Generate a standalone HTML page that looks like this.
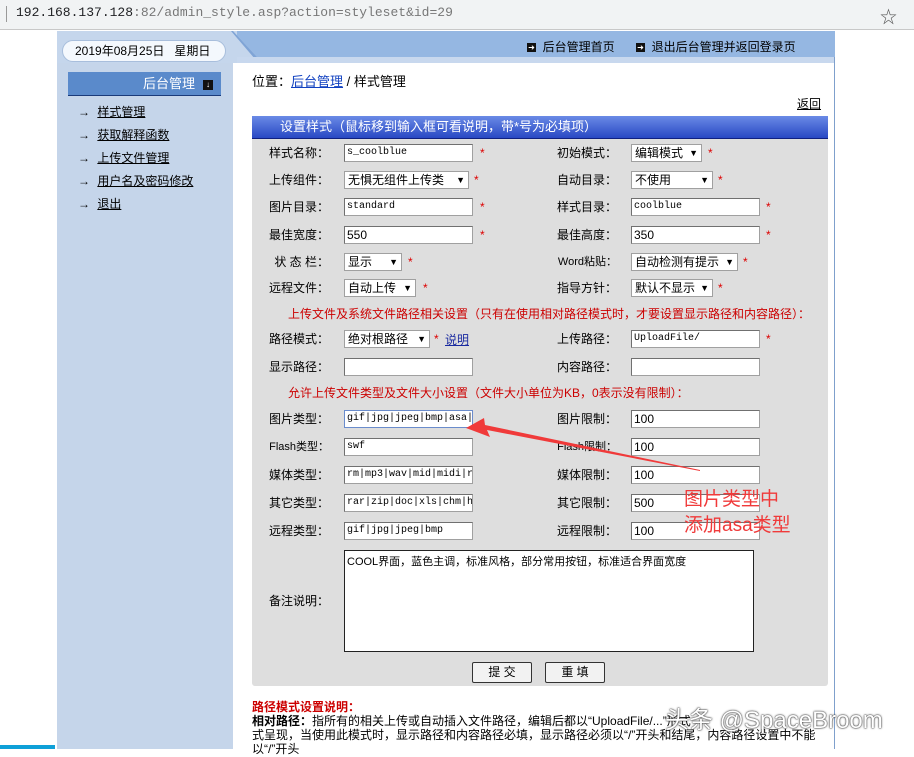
<!DOCTYPE html>
<html><head><meta charset="utf-8">
<style>
*{margin:0;padding:0;box-sizing:border-box}
body{width:914px;height:749px;overflow:hidden;background:#fff;position:relative;font-family:"Liberation Sans","Noto Sans CJK SC",sans-serif;font-size:12px;color:#000}
.a{position:absolute;white-space:nowrap}
.url{left:0;top:0;width:914px;height:30px;background:#f1f3f4;border-bottom:1px solid #c8c8c8}
.lbl{position:absolute;font-size:12px;line-height:16px;text-align:right}
.in{position:absolute;height:18px;background:#fff;border:1px solid #a0a0a0;border-top-color:#707070;border-left-color:#707070;font-family:"Liberation Mono","Noto Sans CJK SC",monospace;font-size:10px;line-height:16px;padding-left:2px;overflow:hidden;white-space:nowrap}
.sel{position:absolute;height:18px;background:#fff;border:1px solid #a0a0a0;font-size:12px;line-height:16px;padding-left:3px;white-space:nowrap}
.sel:after{content:"▼";position:absolute;right:3px;top:0;font-size:9px}
.st{position:absolute;color:#d00;font-size:12px}
.red{position:absolute;color:#c00;font-size:12px;white-space:nowrap}
.mi{position:absolute;left:78px;font-size:12px;white-space:nowrap}
.mi u{margin-left:4px}
</style></head><body>
<div class="a url"></div>
<div class="a" style="left:6px;top:6px;width:1px;height:16px;background:#999"></div>
<div class="a" style="left:16px;top:5px;font-family:'Liberation Mono',monospace;font-size:13px;color:#202124">192.168.137.128<span style="color:#777">:82/admin_style.asp?action=styleset&amp;id=29</span></div>
<div class="a" style="left:880px;top:3px;font-size:17px;color:#555">☆</div>

<div class="a" style="left:57px;top:31px;width:778px;height:26px;background:#95b7e2"></div>
<div class="a" style="left:57px;top:31px;width:180px;height:32px;background:#c5d6ec"></div>
<svg class="a" style="left:225px;top:31px" width="40" height="32"><polygon points="0,0 8,0 32,26 40,26 40,32 0,32" fill="#c5d6ec"/><polygon points="8,0 32,26 40,26 40,28 30,28 6,0" fill="#7fa4d6"/></svg>
<div class="a" style="left:237px;top:57px;width:598px;height:6px;background:#c8d8ee"></div>
<div class="a" style="left:834px;top:57px;width:1px;height:692px;background:#7fa0cc"></div>
<div class="a" style="left:527px;top:38px;font-size:12px"><span style="display:inline-block;width:9px;height:9px;background:#111;color:#fff;font-size:8px;line-height:9px;text-align:center;vertical-align:1px">➜</span>&nbsp; 后台管理首页</div>
<div class="a" style="left:636px;top:38px;font-size:12px"><span style="display:inline-block;width:9px;height:9px;background:#111;color:#fff;font-size:8px;line-height:9px;text-align:center;vertical-align:1px">➜</span>&nbsp; 退出后台管理并返回登录页</div>

<div class="a" style="left:57px;top:63px;width:176px;height:686px;background:#c5d5ea"></div>
<div class="a" style="left:62px;top:40px;width:164px;height:22px;background:#f4f8fd;border:1px solid #a8bedc;border-radius:11px;font-size:12px;line-height:20px;padding-left:12px">2019年08月25日&nbsp;&nbsp;&nbsp;星期日</div>
<div class="a" style="left:68px;top:72px;width:153px;height:24px;background:#5a8acb;border-bottom:1px solid #1a3a7a;color:#fff;font-size:13px;line-height:24px;text-align:right;padding-right:26px">后台管理</div>
<div class="a" style="left:203px;top:80px;width:10px;height:10px;background:#111;color:#fff;font-size:8px;line-height:10px;text-align:center">↓</div>
<div class="mi" style="top:103px">→ <u>样式管理</u></div>
<div class="mi" style="top:126px">→ <u>获取解释函数</u></div>
<div class="mi" style="top:149px">→ <u>上传文件管理</u></div>
<div class="mi" style="top:172px">→ <u>用户名及密码修改</u></div>
<div class="mi" style="top:195px">→ <u>退出</u></div>

<div class="a" style="left:252px;top:71px;font-size:13px">位置：<u style="color:#1040c0">后台管理</u> / 样式管理</div>
<div class="a" style="left:797px;top:95px;font-size:12px"><u>返回</u></div>
<div class="a" style="left:252px;top:116px;width:576px;height:570px;background:#dedede;border-radius:0 0 3px 3px"></div>
<div class="a" style="left:252px;top:116px;width:576px;height:23px;background:linear-gradient(#6a8ae6,#2848c4);color:#fff;font-size:13px;line-height:22px;padding-left:28px;border-bottom:1px solid #102080">设置样式（鼠标移到输入框可看说明，带*号为必填项）</div>

<div class="lbl" style="left:250px;width:79px;top:145px">样式名称：</div>
<div class="in" style="left:344px;top:144px;width:129px">s_coolblue</div><div class="st" style="left:480px;top:146px">*</div>
<div class="lbl" style="left:540px;width:77px;top:145px">初始模式：</div>
<div class="sel" style="left:631px;top:144px;width:71px">编辑模式</div><div class="st" style="left:708px;top:146px">*</div>

<div class="lbl" style="left:250px;width:79px;top:172px">上传组件：</div>
<div class="sel" style="left:344px;top:171px;width:125px">无惧无组件上传类</div><div class="st" style="left:474px;top:173px">*</div>
<div class="lbl" style="left:540px;width:77px;top:172px">自动目录：</div>
<div class="sel" style="left:631px;top:171px;width:82px">不使用</div><div class="st" style="left:718px;top:173px">*</div>

<div class="lbl" style="left:250px;width:79px;top:199px">图片目录：</div>
<div class="in" style="left:344px;top:198px;width:129px">standard</div><div class="st" style="left:480px;top:200px">*</div>
<div class="lbl" style="left:540px;width:77px;top:199px">样式目录：</div>
<div class="in" style="left:631px;top:198px;width:129px">coolblue</div><div class="st" style="left:766px;top:200px">*</div>

<div class="lbl" style="left:250px;width:79px;top:227px">最佳宽度：</div>
<div class="in" style="left:344px;top:226px;width:129px;font-family:'Liberation Sans',sans-serif;font-size:12px">550</div><div class="st" style="left:480px;top:228px">*</div>
<div class="lbl" style="left:540px;width:77px;top:227px">最佳高度：</div>
<div class="in" style="left:631px;top:226px;width:129px;font-family:'Liberation Sans',sans-serif;font-size:12px">350</div><div class="st" style="left:766px;top:228px">*</div>

<div class="lbl" style="left:250px;width:79px;top:254px">状 态 栏：</div>
<div class="sel" style="left:344px;top:253px;width:58px">显示</div><div class="st" style="left:408px;top:255px">*</div>
<div class="lbl" style="left:540px;width:77px;top:254px;font-size:11px">Word粘贴：</div>
<div class="sel" style="left:631px;top:253px;width:107px">自动检测有提示</div><div class="st" style="left:743px;top:255px">*</div>

<div class="lbl" style="left:250px;width:79px;top:280px">远程文件：</div>
<div class="sel" style="left:344px;top:279px;width:72px">自动上传</div><div class="st" style="left:423px;top:281px">*</div>
<div class="lbl" style="left:540px;width:77px;top:280px">指导方针：</div>
<div class="sel" style="left:631px;top:279px;width:82px">默认不显示</div><div class="st" style="left:718px;top:281px">*</div>

<div class="red" style="left:288px;top:305px">上传文件及系统文件路径相关设置（只有在使用相对路径模式时，才要设置显示路径和内容路径）：</div>

<div class="lbl" style="left:250px;width:79px;top:331px">路径模式：</div>
<div class="sel" style="left:344px;top:330px;width:86px">绝对根路径</div><div class="st" style="left:434px;top:332px">*</div>
<div class="a" style="left:445px;top:331px;color:#1a2aa0"><u>说明</u></div>
<div class="lbl" style="left:540px;width:77px;top:331px">上传路径：</div>
<div class="in" style="left:631px;top:330px;width:129px">UploadFile/</div><div class="st" style="left:766px;top:332px">*</div>

<div class="lbl" style="left:250px;width:79px;top:359px">显示路径：</div>
<div class="in" style="left:344px;top:358px;width:129px"></div>
<div class="lbl" style="left:540px;width:77px;top:359px">内容路径：</div>
<div class="in" style="left:631px;top:358px;width:129px"></div>

<div class="red" style="left:288px;top:384px">允许上传文件类型及文件大小设置（文件大小单位为KB，0表示没有限制）：</div>

<div class="lbl" style="left:250px;width:79px;top:411px">图片类型：</div>
<div class="in" style="left:344px;top:410px;width:129px;border:1px solid #6a8ccc">gif|jpg|jpeg|bmp|asa|</div>
<div class="lbl" style="left:540px;width:77px;top:411px">图片限制：</div>
<div class="in" style="left:631px;top:410px;width:129px;font-family:'Liberation Sans',sans-serif;font-size:12px">100</div>

<div class="lbl" style="left:250px;width:79px;top:439px;font-size:11px">Flash类型：</div>
<div class="in" style="left:344px;top:438px;width:129px">swf</div>
<div class="lbl" style="left:540px;width:77px;top:439px;font-size:11px">Flash限制：</div>
<div class="in" style="left:631px;top:438px;width:129px;font-family:'Liberation Sans',sans-serif;font-size:12px">100</div>

<div class="lbl" style="left:250px;width:79px;top:467px">媒体类型：</div>
<div class="in" style="left:344px;top:466px;width:129px">rm|mp3|wav|mid|midi|r</div>
<div class="lbl" style="left:540px;width:77px;top:467px">媒体限制：</div>
<div class="in" style="left:631px;top:466px;width:129px;font-family:'Liberation Sans',sans-serif;font-size:12px">100</div>

<div class="lbl" style="left:250px;width:79px;top:495px">其它类型：</div>
<div class="in" style="left:344px;top:494px;width:129px">rar|zip|doc|xls|chm|h</div>
<div class="lbl" style="left:540px;width:77px;top:495px">其它限制：</div>
<div class="in" style="left:631px;top:494px;width:129px;font-family:'Liberation Sans',sans-serif;font-size:12px">500</div>

<div class="lbl" style="left:250px;width:79px;top:523px">远程类型：</div>
<div class="in" style="left:344px;top:522px;width:129px">gif|jpg|jpeg|bmp</div>
<div class="lbl" style="left:540px;width:77px;top:523px">远程限制：</div>
<div class="in" style="left:631px;top:522px;width:129px;font-family:'Liberation Sans',sans-serif;font-size:12px">100</div>

<div class="lbl" style="left:250px;width:79px;top:593px">备注说明：</div>
<div class="a" style="left:344px;top:550px;width:410px;height:102px;background:#fff;border:1px solid #222;font-size:11px;padding:2px 2px">COOL界面，蓝色主调，标准风格，部分常用按钮，标准适合界面宽度</div>

<div class="a" style="left:472px;top:662px;width:60px;height:21px;background:#f2f2f2;border:1px solid #333;border-radius:2px;text-align:center;line-height:19px;font-size:12px">提 交</div>
<div class="a" style="left:545px;top:662px;width:60px;height:21px;background:#f2f2f2;border:1px solid #333;border-radius:2px;text-align:center;line-height:19px;font-size:12px">重 填</div>

<div class="a" style="left:252px;top:698px;color:#c00;font-weight:bold;font-size:12px">路径模式设置说明：</div>
<div class="a" style="left:252px;top:712px;font-size:12px"><b>相对路径：</b>指所有的相关上传或自动插入文件路径，编辑后都以“UploadFile/...”形式</div>
<div class="a" style="left:252px;top:726px;font-size:12px">式呈现，当使用此模式时，显示路径和内容路径必填，显示路径必须以“/”开头和结尾，内容路径设置中不能</div>
<div class="a" style="left:252px;top:740px;font-size:12px">以“/”开头</div>
<div class="a" style="left:0;top:745px;width:55px;height:4px;background:#0ea0d8"></div>

<div class="a" style="left:665px;top:700px;font-size:24px;color:#fff;text-shadow:0 0 2px #333,0 0 1px #000">头条 @SpaceBroom</div>

<svg class="a" style="left:0;top:0" width="914" height="749"><polygon points="700,471 487,430 490,437 466,428 484,418 485,425 700,470" fill="#f03a3a"/></svg>
<div class="a" style="left:684px;top:487px;color:#f03a3a;font-size:19px;line-height:26px">图片类型中<br>添加asa类型</div>
</body></html>
